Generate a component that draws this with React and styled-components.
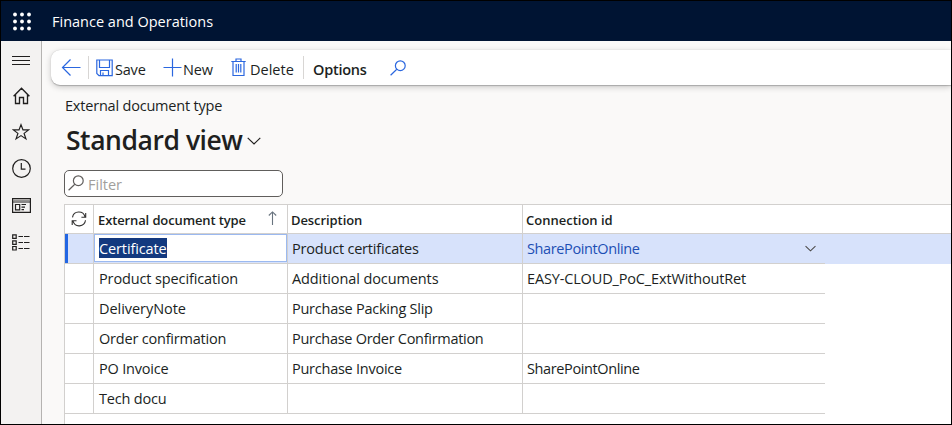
import React from "react";
import styled, { createGlobalStyle } from "styled-components";

const GlobalStyle = createGlobalStyle`
  * { box-sizing: border-box; }
  body { margin: 0; font-family: "Open Sans", "Noto Sans", sans-serif; font-size: 14.5px; color: #201f1e; }
  svg { display: block; flex: none; fill: none; }
`;

const Frame = styled.div`
  width: 952px;
  height: 425px;
  border: 1px solid #000;
  display: flex;
  flex-direction: column;
  overflow: hidden;
  background: #faf9f8;
`;

const TopBar = styled.header`
  height: 40px;
  flex: none;
  display: flex;
  align-items: center;
  gap: 20px;
  padding-left: 11px;
  background: #001433;
  color: #fff;
`;

const Body = styled.div`
  flex: 1;
  display: flex;
  min-height: 0;
`;

const SideNav = styled.nav`
  width: 41px;
  flex: none;
  display: flex;
  flex-direction: column;
  padding-top: 9px;
  background: #f3f2f1;
  border-right: 1px solid #b5b3b1;
`;

const NavButton = styled.div`
  height: ${(p) => p.$height}px;
  padding-left: ${(p) => p.$left || 11}px;
  flex: none;
  display: flex;
  align-items: center;
`;

const Main = styled.main`
  flex: 1;
  min-width: 0;
  display: flex;
  flex-direction: column;
  padding-top: 9px;
`;

const CommandBar = styled.div`
  height: 35px;
  flex: none;
  margin-left: 9px;
  padding-left: 10px;
  display: flex;
  align-items: center;
  background: #fff;
  border-radius: 9px 0 0 9px;
  box-shadow: 0 0.3px 1px rgba(0, 0, 0, 0.22), 0 2px 6px rgba(0, 0, 0, 0.2);
`;

const Command = styled.div`
  display: flex;
  align-items: center;
  gap: ${(p) => p.$gap || 0}px;
  margin-left: ${(p) => p.$left || 0}px;
  width: ${(p) => p.$width}px;
`;

const Separator = styled.span`
  width: 1px;
  height: 23px;
  flex: none;
  background: #d8d6d4;
`;

const Label = styled.span`
  white-space: pre;
  line-height: 20px;
  font-size: ${(p) => p.$size || 14.5}px;
  font-weight: ${(p) => p.$weight || 400};
  letter-spacing: ${(p) => p.$track || 0}px;
  color: ${(p) => p.$color || "inherit"};
  padding-top: ${(p) => p.$drop || 0}px;
`;

const PageHead = styled.section`
  display: flex;
  flex-direction: column;
  padding: 11px 0 0 23px;
  height: 85px;
  flex: none;
`;

const TitleRow = styled.div`
  display: flex;
  align-items: center;
  gap: 3px;
  height: 36px;
  margin-top: 7px;
  padding-left: 1px;
`;

const Title = styled.h1`
  margin: 0;
  width: 178px;
  white-space: nowrap;
  font-size: 26.5px;
  line-height: 34px;
  padding-bottom: 2px;
  font-weight: 600;
  letter-spacing: -0.45px;
`;

const FilterBox = styled.div`
  margin-left: 22px;
  width: 219px;
  height: 27px;
  flex: none;
  display: flex;
  align-items: center;
  gap: 4px;
  padding: 0 0 1px 3px;
  background: #fff;
  border: 1px solid #605e5c;
  border-radius: 5px;
`;

const Grid = styled.section`
  flex: 1;
  margin: 7px 0 0 22px;
  border: solid #d2d0ce;
  border-width: 1px 0 0 1px;
  background: #fff;
`;

const Row = styled.div`
  display: grid;
  grid-template-columns: 29px 194px 235px 302px;
  height: ${(p) => (p.$header ? 29 : 30)}px;
  background: ${(p) => (p.$selected ? "#d7e2fb" : "#fff")};
  box-shadow: ${(p) => (p.$header ? "inset 0 -1px #d2d0ce" : p.$selected ? "inset 3px 0 #2266e3" : "none")};
`;

const Cell = styled.div`
  display: flex;
  align-items: center;
  justify-content: ${(p) => (p.$spread ? "space-between" : "flex-start")};
  padding-left: ${(p) => p.$pad ?? 5}px;
  padding-right: ${(p) => p.$end || 0}px;
  min-width: 0;
  border-bottom: 1px solid #d2d0ce;
  border-right: ${(p) => (p.$last ? "none" : "1px solid #d2d0ce")};
`;

const SortMark = styled.span`
  padding-bottom: 2px;
`;

const CellInput = styled.div`
  width: 193px;
  height: 28px;
  align-self: flex-start;
  display: flex;
  align-items: center;
  padding-left: 4px;
  background: #fff;
  border: 1px solid #9bb9f0;
`;

const Selection = styled.span`
  height: 20px;
  width: 68px;
  display: flex;
  align-items: center;
  background: #13397f;
  color: #fff;
`;

const Waffle = () => (
  <svg width="20" height="20">
    {[3, 10, 17].flatMap((y) =>
      [3, 10, 17].map((x) => <circle key={`${x}-${y}`} cx={x} cy={y + 0.5} r="1.9" fill="#fff" />)
    )}
  </svg>
);

const MenuIcon = () => (
  <svg width="18" height="10" stroke="#201f1e"><path d="M0 .5h18M0 4.5h18M0 8.5h18" /></svg>
);
const HomeIcon = () => (
  <svg width="17" height="18" stroke="#201f1e" strokeWidth="1.35">
    <path d="M.6 9.2 8.5 1.3l7.9 7.9M2.5 7.6v8.9h4V10.5h4v6h4V7.6" />
  </svg>
);
const StarIcon = () => (
  <svg width="18" height="18" stroke="#201f1e" strokeWidth="1.2">
    <path d="m9 1.7 2 5.2h5.6l-4.5 3.5 1.8 5.5L9 12.6l-4.9 3.3 1.8-5.5L1.4 6.9H7Z" />
  </svg>
);
const ClockIcon = () => (
  <svg width="19" height="19" stroke="#201f1e" strokeWidth="1.2">
    <circle cx="9.5" cy="9.5" r="8.8" /><path d="M9.3 4v6.2h4.2" />
  </svg>
);
const WorkspaceIcon = () => (
  <svg width="19" height="15" stroke="#201f1e" strokeWidth="1.2">
    <path d="M.6.6h17.8v13.8H.6ZM.6 4h17.8M3.5 6.5h4.2v5.4H3.5ZM9.5 6.5H14M9.5 9.1H13M9.5 11.6H12" />
    <path d="M1 2.3h17" stroke="#8a8886" />
  </svg>
);
const ModulesIcon = () => (
  <svg width="18" height="17" stroke="#201f1e" strokeWidth="1.2">
    <path d="M.7.9h3.5v3.5H.7ZM.7 6.8h3.5v3.5H.7ZM.7 12.5h3.5V16H.7ZM6.5 2.5H11M12 2.5h5.5M6.5 8.5H11M12 8.5h5.5M6.5 14.5H11M12 14.5h5.5" />
  </svg>
);
const BackIcon = () => (
  <svg width="20" height="18" stroke="#2b67df" strokeWidth="1.2"><path d="M9.5.5 1.5 8.5l8 8M1.5 8.5H19.5" /></svg>
);
const SaveIcon = () => (
  <svg width="17" height="18" stroke="#2b67df" strokeWidth="1.2">
    <path d="M.8 1h15.4v15.7H3L.8 14.5ZM3.5 1v7.5h10V1M4.5 16.5v-5h8v5M7 13.5v3" />
  </svg>
);
const PlusIcon = () => (
  <svg width="19" height="19" stroke="#2b67df" strokeWidth="1.2"><path d="M9.5.5v18M.5 9.5h18" /></svg>
);
const TrashIcon = () => (
  <svg width="15" height="19" stroke="#2b67df" strokeWidth="1.2">
    <path d="M.3 3.5h14.4M5 3.3V1h5v2.3M2 3.5v14h11v-14M5.2 6v8.5M7.5 6v8.5M9.8 6v8.5" />
  </svg>
);
const SearchIcon = ({ color }) => (
  <svg width="16" height="16" stroke={color} strokeWidth="1.2">
    <circle cx="10.3" cy="5.7" r="4.9" /><path d="M6.8 9.2.6 15.3" />
  </svg>
);
const ChevronIcon = ({ width, height, color, stroke }) => (
  <svg width={width} height={height} viewBox="0 0 14 8" stroke={color} strokeWidth={stroke}>
    <path d="m.7.9 6.3 6.1L13.3.9" />
  </svg>
);
const RefreshIcon = () => (
  <svg width="16" height="16" stroke="#323130" strokeWidth="1.1">
    <path d="M1.5 6.3A6.4 6.4 0 0 1 14 5.8M14.7 2v4.3h-4.3M14.5 9.3A6.4 6.4 0 0 1 2 10.2M1.2 14V9.7h4.3" />
  </svg>
);
const SortIcon = () => (
  <svg width="9" height="14" stroke="#69747f" strokeWidth="1.1"><path d="M4.5 14V1M.8 4.5 4.5.9l3.7 3.6" /></svg>
);

const records = [
  { type: ["Product specification", -0.12], description: ["Additional documents", -0.1], connection: ["EASY-CLOUD_PoC_ExtWithoutRet", -0.15] },
  { type: ["DeliveryNote", -0.05], description: ["Purchase Packing Slip", -0.25] },
  { type: ["Order confirmation", -0.2], description: ["Purchase Order Confirmation", -0.29] },
  { type: ["PO Invoice", -0.2], description: ["Purchase Invoice", -0.25], connection: ["SharePointOnline", -0.38] },
  { type: ["Tech docu", -0.2] },
];

const Value = ({ data }) => (data ? <Label $track={data[1]}>{data[0]}</Label> : null);

export default function App() {
  return (
    <>
      <GlobalStyle />
      <Frame>
        <TopBar>
          <Waffle />
          <Label $drop={1}>Finance and Operations</Label>
        </TopBar>
        <Body>
          <SideNav>
            <NavButton $height={21}><MenuIcon /></NavButton>
            <NavButton $height={49} $left={12}><HomeIcon /></NavButton>
            <NavButton $height={24}><StarIcon /></NavButton>
            <NavButton $height={49}><ClockIcon /></NavButton>
            <NavButton $height={24}><WorkspaceIcon /></NavButton>
            <NavButton $height={51}><ModulesIcon /></NavButton>
          </SideNav>
          <Main>
            <CommandBar>
              <Command $width={27}><BackIcon /></Command>
              <Separator />
              <Command $left={7} $gap={2} $width={67}><SaveIcon /><Label $drop={4} $track={-0.2}>Save</Label></Command>
              <Command $gap={1} $width={68}><PlusIcon /><Label $drop={4} $track={-0.1}>New</Label></Command>
              <Command $gap={4} $width={72}><TrashIcon /><Label $drop={4}>Delete</Label></Command>
              <Separator />
              <Command $left={9} $width={77}><Label $weight={600} $drop={4} $track={-0.25}>Options</Label></Command>
              <SearchIcon color="#2b67df" />
            </CommandBar>
            <PageHead>
              <Label $track={-0.2}>External document type</Label>
              <TitleRow>
                <Title>Standard view</Title>
                <ChevronIcon width="14" height="8" color="#201f1e" stroke="1.2" />
              </TitleRow>
            </PageHead>
            <FilterBox>
              <SearchIcon color="#605e5c" />
              <Label $drop={4} $color="#a19f9d">Filter</Label>
            </FilterBox>
            <Grid>
              <Row $header>
                <Cell $pad={6}><RefreshIcon /></Cell>
                <Cell $pad={4} $end={10} $spread>
                  <Label $size={13} $weight={600} $track={-0.12} $drop={2}>External document type</Label>
                  <SortMark><SortIcon /></SortMark>
                </Cell>
                <Cell $pad={3}><Label $size={13} $weight={600} $track={-0.08} $drop={2}>Description</Label></Cell>
                <Cell $pad={3} $last><Label $size={13} $weight={600} $drop={2}>Connection id</Label></Cell>
              </Row>
              <Row $selected>
                <Cell />
                <Cell $pad={0}><CellInput><Selection><Label $track={-0.12} $drop={1}>Certificate</Label></Selection></CellInput></Cell>
                <Cell $pad={4}><Label $track={-0.2}>Product certificates</Label></Cell>
                <Cell $last $spread $pad={4} $end={9}>
                  <Label $track={-0.38} $color="#1d4fb4">SharePointOnline</Label>
                  <ChevronIcon width="11" height="7" color="#484644" stroke="1.3" />
                </Cell>
              </Row>
              {records.map((r) => (
                <Row key={r.type[0]}>
                  <Cell />
                  <Cell><Value data={r.type} /></Cell>
                  <Cell $pad={4}><Value data={r.description} /></Cell>
                  <Cell $pad={4} $last><Value data={r.connection} /></Cell>
                </Row>
              ))}
            </Grid>
          </Main>
        </Body>
      </Frame>
    </>
  );
}
